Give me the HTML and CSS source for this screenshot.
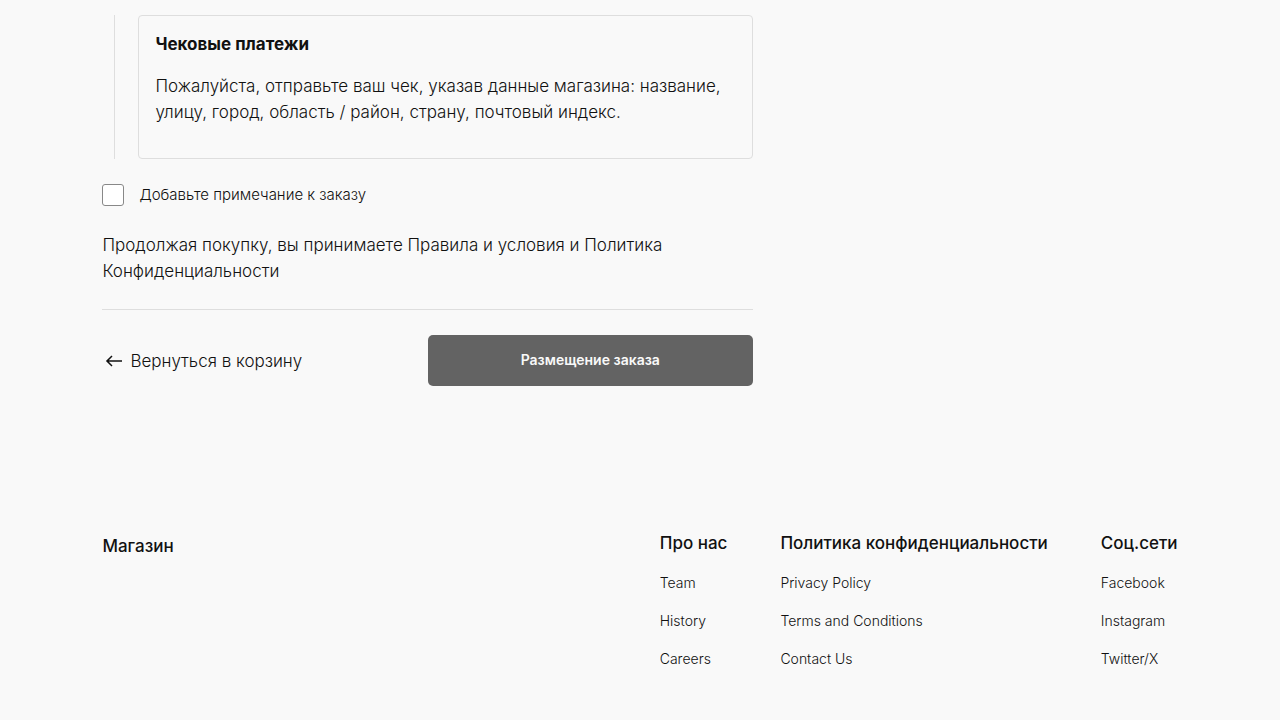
FILE: index.html
```html
<!DOCTYPE html>
<html lang="ru">
<head>
<meta charset="utf-8">
<meta name="viewport" content="width=device-width, initial-scale=1">
<title>Оформление заказа</title>
<link rel="stylesheet" href="styles.css">
</head>
<body>
<main class="checkout">
  <form class="checkout-form">
    <section class="payment-step">
      <div class="payment-card">
        <h2 class="payment-title">Чековые платежи</h2>
        <p class="payment-text">Пожалуйста, отправьте ваш чек, указав данные магазина: название, улицу, город, область / район, страну, почтовый индекс.</p>
      </div>
    </section>
    <div class="note">
      <input class="note-box" type="checkbox" id="order-note">
      <label class="note-label" for="order-note">Добавьте примечание к заказу</label>
    </div>
    <p class="terms">Продолжая покупку, вы принимаете Правила и условия и Политика Конфиденциальности</p>
    <div class="actions">
      <a class="back-link" href="#">
        <svg class="back-icon" viewBox="0 0 24 24" width="24" height="24" aria-hidden="true"><path d="M20 11.2H6.8l3.7-3.7-1-1L3.9 12l5.6 5.5 1-1-3.7-3.8H20z" fill="currentColor"/></svg>
        <span>Вернуться в корзину</span>
      </a>
      <button class="submit" type="button">Размещение заказа</button>
    </div>
  </form>
</main>
<footer class="footer">
  <a class="site-name" href="#">Магазин</a>
  <div class="footer-columns">
    <nav class="footer-nav" aria-labelledby="nav-about">
      <h2 class="footer-title" id="nav-about">Про нас</h2>
      <a class="footer-link" href="#">Team</a>
      <a class="footer-link" href="#">History</a>
      <a class="footer-link" href="#">Careers</a>
    </nav>
    <nav class="footer-nav" aria-labelledby="nav-privacy">
      <h2 class="footer-title" id="nav-privacy">Политика конфиденциальности</h2>
      <a class="footer-link" href="#">Privacy Policy</a>
      <a class="footer-link" href="#">Terms and Conditions</a>
      <a class="footer-link" href="#">Contact Us</a>
    </nav>
    <nav class="footer-nav" aria-labelledby="nav-social">
      <h2 class="footer-title" id="nav-social">Соц.сети</h2>
      <a class="footer-link" href="#">Facebook</a>
      <a class="footer-link" href="#">Instagram</a>
      <a class="footer-link" href="#">Twitter/X</a>
    </nav>
  </div>
</footer>
</body>
</html>
```
FILE: styles.css
```css
* {
  box-sizing: border-box;
}

body {
  margin: 0;
  background: #f9f9f9;
  color: #111;
  font-family: Inter, "Liberation Sans", sans-serif;
  font-size: 17px;
  font-weight: 300;
  line-height: 26px;
}

h2,
p {
  margin: 0;
}

a {
  color: inherit;
  text-decoration: none;
}

.checkout {
  display: grid;
  grid-template-columns: minmax(0, 651fr) minmax(0, 425fr);
  padding: 15px 8% 0;
}

.checkout-form {
  display: flex;
  flex-direction: column;
  gap: 25px;
}

.payment-step {
  margin-left: 12px;
  padding-left: 23px;
  border-left: 1px solid #dedede;
}

.payment-card {
  display: flex;
  flex-direction: column;
  gap: 16px;
  padding: 15px 16px 33px;
  border: 1px solid #dedede;
  border-radius: 4px;
}

.payment-title {
  font-size: 17px;
  font-weight: 700;
}

.note {
  display: flex;
  align-items: center;
  gap: 15px;
}

.note-box {
  appearance: none;
  width: 22px;
  height: 22px;
  margin: 0;
  border: 1px solid #888;
  border-radius: 3px;
  background: #fff;
}

.note-box:checked {
  background: #111;
}

.note-label {
  font-size: 15px;
  line-height: 22px;
}

.terms {
  padding-top: 1px;
}

.actions {
  display: grid;
  grid-template-columns: 1fr 1fr;
  align-items: center;
  padding-top: 25px;
  border-top: 1px solid #dedede;
}

.back-link {
  display: flex;
  align-items: center;
  gap: 4px;
}

.submit {
  padding: 12px 24px 13px;
  border: 0;
  border-radius: 5px;
  background: #636363;
  color: #f9f9f9;
  font: inherit;
  font-size: 14px;
  font-weight: 600;
}

.footer {
  display: flex;
  justify-content: space-between;
  padding: 144px 8% 48px;
}

.site-name {
  padding-top: 3px;
  font-weight: 500;
}

.footer-columns {
  display: flex;
  gap: 53px;
}

.footer-nav {
  display: flex;
  flex-direction: column;
  gap: 16px;
}

.footer-title {
  font-size: 17px;
  font-weight: 500;
}

.footer-link {
  font-size: 14px;
  line-height: 22px;
}
```
